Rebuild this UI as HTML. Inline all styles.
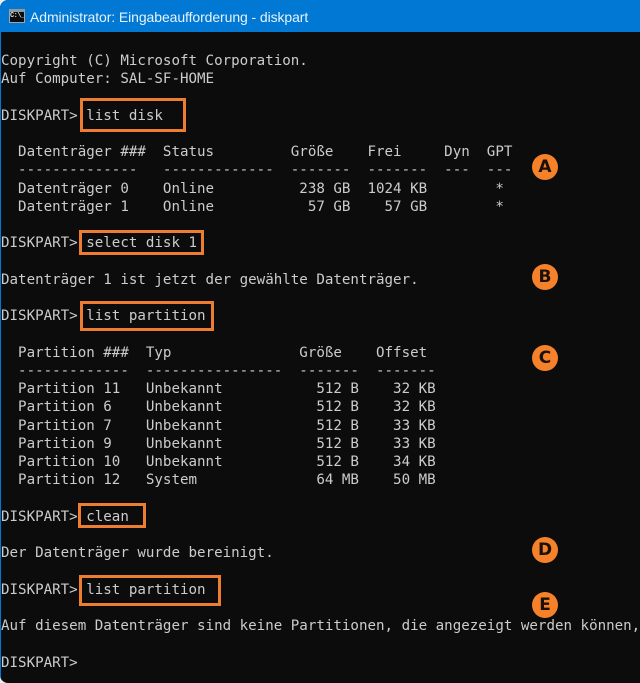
<!DOCTYPE html>
<html lang="de"><head><meta charset="utf-8"><title>Administrator: Eingabeaufforderung - diskpart</title>
<style>
html,body{margin:0;padding:0;background:#fff;}
#w{position:relative;width:640px;height:683px;overflow:hidden;background:#e8eef2;}
#win{position:absolute;left:0;top:0;width:660px;height:683px;background:#0c0c0c;border-radius:8px 0 0 8px;overflow:hidden;}
#tb{position:absolute;left:0;top:0;width:100%;height:32px;background:#0078d4;}
#lb{position:absolute;left:0;top:32px;width:1px;height:651px;background:#0078d4;}
#ic{position:absolute;left:9px;top:9px;width:16px;height:14px;background:#0c0c0c;border:1px solid #9aa7b0;border-top:3px solid #8d9aa3;box-sizing:border-box;overflow:hidden;font:bold 7px/9px "Liberation Mono",monospace;color:#e0e0e0;white-space:pre;letter-spacing:-.6px;}
#ti{position:absolute;left:30px;top:9px;font:14px/17px "Liberation Sans",sans-serif;color:#e6f3fc;white-space:pre;letter-spacing:-.09px;}
pre{position:absolute;left:1px;top:52px;margin:0;font:14.17px/18.24px "DejaVu Sans Mono","Liberation Mono",monospace;color:#cccccc;filter:blur(.3px);}
.b{position:absolute;border:3px solid #ed7d31;box-sizing:border-box;}
.c{position:absolute;left:532px;width:26px;height:26px;border-radius:50%;background:#f5822a;color:#1a1008;font:bold 17px/26px "DejaVu Sans",sans-serif;text-align:center;}
</style></head><body><div id="w"><div id="win">
<div id="tb"></div><div id="lb"></div><div id="ic">C:\_</div>
<div id="ti">Administrator: Eingabeaufforderung - diskpart</div>
<pre>Copyright (C) Microsoft Corporation.
Auf Computer: SAL-SF-HOME

DISKPART&gt; list disk

  Datenträger ###  Status         Größe    Frei     Dyn  GPT
  --------------   -------------  -------  -------  ---  ---
  Datenträger 0    Online          238 GB  1024 KB        *
  Datenträger 1    Online           57 GB    57 GB        *

DISKPART&gt; select disk 1

Datenträger 1 ist jetzt der gewählte Datenträger.

DISKPART&gt; list partition

  Partition ###  Typ               Größe    Offset
  -------------  ----------------  -------  -------
  Partition 11   Unbekannt           512 B    32 KB
  Partition 6    Unbekannt           512 B    32 KB
  Partition 7    Unbekannt           512 B    33 KB
  Partition 9    Unbekannt           512 B    33 KB
  Partition 10   Unbekannt           512 B    34 KB
  Partition 12   System              64 MB    50 MB

DISKPART&gt; clean

Der Datenträger wurde bereinigt.

DISKPART&gt; list partition

Auf diesem Datenträger sind keine Partitionen, die angezeigt werden können,

DISKPART&gt;</pre>
<div class="b" style="left:80px;top:98px;width:106px;height:34px"></div>
<div class="b" style="left:79px;top:230px;width:125px;height:25px"></div>
<div class="b" style="left:80px;top:301px;width:134px;height:30px"></div>
<div class="b" style="left:78px;top:503px;width:68px;height:25px"></div>
<div class="b" style="left:79px;top:575px;width:142px;height:31px"></div>
<div class="c" style="top:154px">A</div>
<div class="c" style="top:264px">B</div>
<div class="c" style="top:345px">C</div>
<div class="c" style="top:537px">D</div>
<div class="c" style="top:592px">E</div>
</div></div></body></html>
